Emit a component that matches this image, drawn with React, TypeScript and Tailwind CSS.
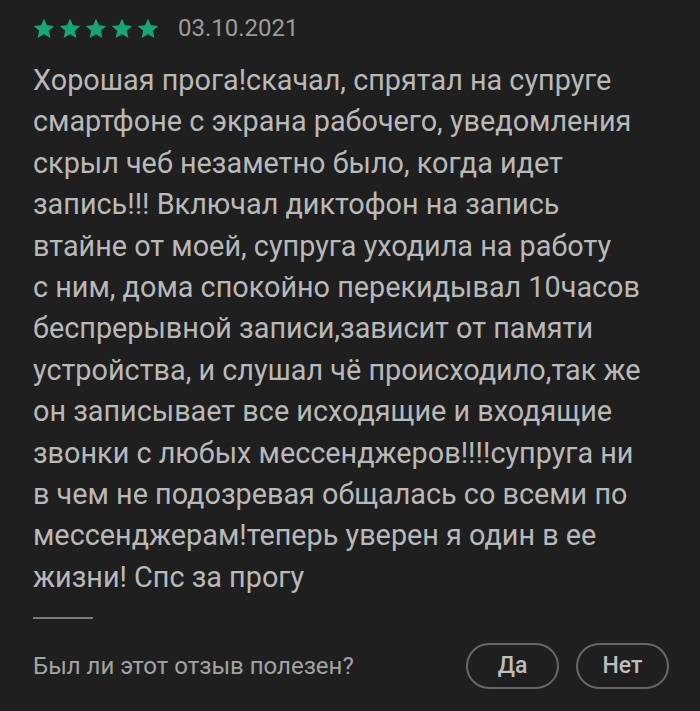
import React from "react";

const lines = [
  "Хорошая прога!скачал, спрятал на супруге",
  "смартфоне с экрана рабочего, уведомления",
  "скрыл чеб незаметно было, когда идет",
  "запись!!! Включал диктофон на запись",
  "втайне от моей, супруга уходила на работу",
  "с ним, дома спокойно перекидывал 10часов",
  "беспрерывной записи,зависит от памяти",
  "устройства, и слушал чё происходило,так же",
  "он записывает все исходящие и входящие",
  "звонки с любых мессенджеров!!!!супруга ни",
  "в чем не подозревая общалась со всеми по",
  "мессенджерам!теперь уверен я один в ее",
  "жизни! Спс за прогу",
];

function Star() {
  return (
    <svg width="22" height="21" viewBox="0 0 24 23" className="shrink-0">
      <path
        d="M12 0.8l3.3 7.2 7.9.8-5.9 5.3 1.7 7.8L12 17.9l-7 4 1.7-7.8L.8 8.8l7.9-.8z"
        fill="#14a676"
      />
    </svg>
  );
}

export default function App() {
  return (
    <div
      className="w-[700px] h-[711px] bg-[#1f1f1f] pl-[33px] pr-[31px] pt-[17px] overflow-hidden"
      style={{ fontFamily: "Roboto, 'Noto Sans', sans-serif" }}
    >
      <div className="flex items-center h-[22px]">
        <div className="flex gap-[4px]">
          <Star />
          <Star />
          <Star />
          <Star />
          <Star />
        </div>
        <span className="ml-[19px] text-[24px] text-[#9c9c9c] leading-none">03.10.2021</span>
      </div>
      <div className="mt-[21px] text-[28.8px] leading-[41.4px] text-[#b9b9b9]">
        {lines.map((l, i) => (
          <div key={i} className="whitespace-nowrap">
            {l}
          </div>
        ))}
      </div>
      <div className="mt-[19px] w-[60px] h-[2px] bg-[#7a7a7a]" />
      <div className="mt-[24px] flex items-center justify-between">
        <span className="text-[24px] text-[#a3a3a3]">Был ли этот отзыв полезен?</span>
        <div className="flex gap-[17px]">
          <button className="w-[93px] h-[46px] rounded-full border-2 border-[#666] text-[23px] font-medium text-[#bdbdbd]">
            Да
          </button>
          <button className="w-[93px] h-[46px] rounded-full border-2 border-[#666] text-[23px] font-medium text-[#bdbdbd]">
            Нет
          </button>
        </div>
      </div>
    </div>
  );
}
